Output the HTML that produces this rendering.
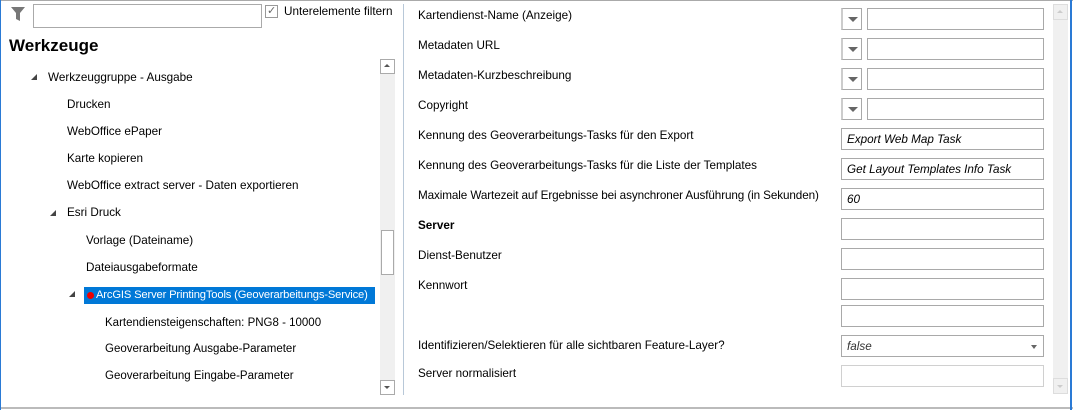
<!DOCTYPE html>
<html><head><style>
body{margin:0;width:1073px;height:410px;background:#fff;font-family:"Liberation Sans",sans-serif;font-size:11.7px;color:#000;position:relative;overflow:hidden}
div,span{position:absolute;box-sizing:border-box}
.t{white-space:nowrap;line-height:14px}
.in{border:1px solid #a9a9a9;background:#fff;height:22px;width:203px;left:841px}
.dd{border:1px solid #a9a9a9;border-left:2px solid #ccc;background:#fff;height:22px;width:21px;left:841px}
.dd:after{content:"";position:absolute;left:5px;top:8px;border-left:5px solid transparent;border-right:5px solid transparent;border-top:5px solid #666}
.in2{left:867px;width:177px}
.it{font-style:italic;padding:4px 0 0 5px;color:#000}
.tri{width:0;height:0;border-left:6px solid transparent;border-bottom:6px solid #444}
</style></head><body>
<div style="left:0;top:0;width:1073px;height:1px;background:#aaa"></div>
<div style="left:0;top:407px;width:1073px;height:2px;background:#bbb"></div>
<div style="left:0;top:0;width:1px;height:410px;background:#2a7ad5"></div>
<div style="left:1070px;top:0;width:2px;height:410px;background:#2a7ad5"></div>
<svg style="position:absolute;left:10px;top:6px" width="16" height="16"><path d="M1 1H15L10 7V15L6 13V7Z" fill="#777"/></svg>
<div style="left:33px;top:4px;width:229px;height:24px;border:1px solid #aaa"></div>
<div style="left:265px;top:5px;width:13px;height:13px;border:1px solid #999"></div>
<span class="t" style="left:267px;top:4px;color:#666;font-size:11px">✓</span>
<span class="t" style="left:284px;top:5px">Unterelemente filtern</span>
<span class="t" style="left:9px;top:36px;font-size:17px;font-weight:bold;line-height:20px">Werkzeuge</span>
<div class="tri" style="left:31px;top:74px"></div>
<span class="t" style="left:48px;top:71px">Werkzeuggruppe - Ausgabe</span>
<span class="t" style="left:67px;top:98px">Drucken</span>
<span class="t" style="left:67px;top:125px">WebOffice ePaper</span>
<span class="t" style="left:67px;top:152px">Karte kopieren</span>
<span class="t" style="left:67px;top:179px">WebOffice extract server - Daten exportieren</span>
<div class="tri" style="left:50px;top:210px"></div>
<span class="t" style="left:67px;top:206px">Esri Druck</span>
<span class="t" style="left:86px;top:234px">Vorlage (Dateiname)</span>
<span class="t" style="left:86px;top:261px">Dateiausgabeformate</span>
<div class="tri" style="left:69px;top:291px"></div>
<div style="left:84px;top:287px;width:291px;height:17px;background:#0078d7"></div>
<div style="left:87px;top:292px;width:7px;height:7px;border-radius:50%;background:#e00"></div>
<span class="t" style="left:96px;top:288px;color:#fff;font-size:11.2px;letter-spacing:-0.15px">ArcGIS Server PrintingTools (Geoverarbeitungs-Service)</span>
<span class="t" style="left:105px;top:316px;font-size:11.5px">Kartendiensteigenschaften: PNG8 - 10000</span>
<span class="t" style="left:105px;top:342px;font-size:11.5px">Geoverarbeitung Ausgabe-Parameter</span>
<span class="t" style="left:105px;top:369px;font-size:11.5px">Geoverarbeitung Eingabe-Parameter</span>
<div style="left:380px;top:59px;width:15px;height:336px;background:#f0f0f0"></div>
<div style="left:380px;top:59px;width:15px;height:15px;border:1px solid #aaa;background:#fff"></div>
<div style="left:384px;top:64px;border-left:3px solid transparent;border-right:3px solid transparent;border-bottom:3px solid #555"></div>
<div style="left:381px;top:230px;width:13px;height:45px;border:1px solid #aaa;background:#fff"></div>
<div style="left:380px;top:380px;width:15px;height:15px;border:1px solid #aaa;background:#fff"></div>
<div style="left:384px;top:386px;border-left:3px solid transparent;border-right:3px solid transparent;border-top:3px solid #555"></div>
<div style="left:403px;top:4px;width:1px;height:391px;background:#b8c8d8"></div>
<span class="t" style="left:418px;top:9px">Kartendienst-Name (Anzeige)</span>
<span class="t" style="left:418px;top:39px">Metadaten URL</span>
<span class="t" style="left:418px;top:69px">Metadaten-Kurzbeschreibung</span>
<span class="t" style="left:418px;top:99px">Copyright</span>
<span class="t" style="left:418px;top:129px">Kennung des Geoverarbeitungs-Tasks für den Export</span>
<span class="t" style="left:418px;top:159px">Kennung des Geoverarbeitungs-Tasks für die Liste der Templates</span>
<span class="t" style="left:418px;top:189px;letter-spacing:-0.1px">Maximale Wartezeit auf Ergebnisse bei asynchroner Ausführung (in Sekunden)</span>
<span class="t" style="left:418px;top:219px;font-weight:bold">Server</span>
<span class="t" style="left:418px;top:249px">Dienst-Benutzer</span>
<span class="t" style="left:418px;top:279px">Kennwort</span>
<span class="t" style="left:418px;top:339px">Identifizieren/Selektieren für alle sichtbaren Feature-Layer?</span>
<span class="t" style="left:418px;top:367px">Server normalisiert</span>
<div class="dd" style="top:8px"></div><div class="in in2" style="top:8px"></div>
<div class="dd" style="top:38px"></div><div class="in in2" style="top:38px"></div>
<div class="dd" style="top:68px"></div><div class="in in2" style="top:68px"></div>
<div class="dd" style="top:98px"></div><div class="in in2" style="top:98px"></div>
<div class="in it" style="top:128px">Export Web Map Task</div>
<div class="in it" style="top:158px">Get Layout Templates Info Task</div>
<div class="in it" style="top:188px">60</div>
<div class="in" style="top:218px"></div>
<div class="in" style="top:248px"></div>
<div class="in" style="top:278px"></div>
<div class="in" style="top:305px"></div>
<div class="in it" style="top:335px;color:#333">false</div>
<div style="left:1031px;top:345px;border-left:3px solid transparent;border-right:3px solid transparent;border-top:4px solid #666"></div>
<div class="in" style="top:365px;border-color:#d0d0d0"></div>
<div style="left:1053px;top:4px;width:15px;height:390px;background:#f0f0f0"></div>
<div style="left:1053px;top:4px;width:15px;height:16px;border:1px solid #ddd"></div>
<div style="left:1057px;top:10px;border-left:3px solid transparent;border-right:3px solid transparent;border-bottom:3px solid #ccc"></div>
<div style="left:1053px;top:378px;width:15px;height:16px;border:1px solid #ddd"></div>
<div style="left:1057px;top:385px;border-left:3px solid transparent;border-right:3px solid transparent;border-top:3px solid #ccc"></div>
</body></html>
